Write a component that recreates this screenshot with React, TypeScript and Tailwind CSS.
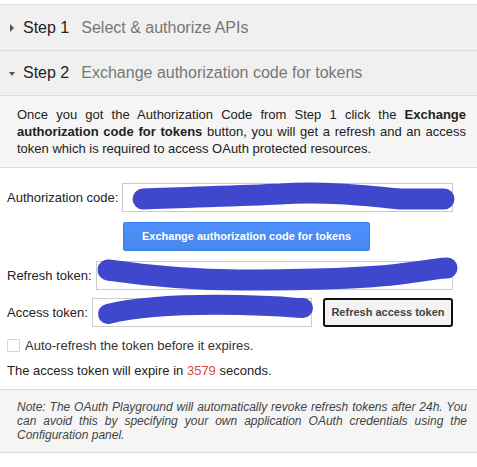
import React from 'react'

const font = { fontFamily: '"Liberation Sans", Arial, sans-serif' }

function StepHeader({ step, title, open }: { step: string; title: string; open?: boolean }) {
  return (
    <div className="flex items-center bg-[#f0f0f0] border-b border-[#dcdcdc] text-[16px]">
      <span className="w-[23px] flex justify-center pl-[1px]">
        {open ? (
          <span className="block w-0 h-0 border-l-[3.5px] border-r-[3.5px] border-t-[4px] border-l-transparent border-r-transparent border-t-[#555] mt-[1px]" />
        ) : (
          <span className="block w-0 h-0 border-t-[4px] border-b-[4px] border-l-[4px] border-t-transparent border-b-transparent border-l-[#555]" />
        )}
      </span>
      <span className="text-[#222]">{step}</span>
      <span className="ml-[12px] text-[#777]">{title}</span>
    </div>
  )
}

export default function App() {
  return (
    <div
      className="relative w-[477px] h-[467px] bg-white overflow-hidden text-[#222]"
      style={font}
    >
      <div className="mt-[4px] border-t border-[#dcdcdc]">
        <div className="h-[46px] flex flex-col [&>div]:h-full">
          <StepHeader step="Step 1" title="Select & authorize APIs" />
        </div>
        <div className="h-[45px] flex flex-col [&>div]:h-full">
          <StepHeader step="Step 2" title="Exchange authorization code for tokens" open />
        </div>

        <div className="bg-[#f5f5f5] border-b border-[#dcdcdc] pl-[17px] pr-[11px] pt-[10px] pb-[10px] text-[13px] leading-[17px] text-[#222] text-justify">
          Once you got the Authorization Code from Step 1 click the{' '}
          <b>Exchange authorization code for tokens</b> button, you will get a refresh and an
          access token which is required to access OAuth protected resources.
        </div>

        <div className="pl-[7px] pr-[24px] pt-[15px] text-[13px] text-[#222]">
          <div className="flex items-center gap-[4px]">
            <span>Authorization code:</span>
            <div className="flex-1 h-[29px] border border-[#ccc] bg-white" />
          </div>

          <button className="mt-[10px] ml-[116px] w-[247px] h-[29px] rounded-[2px] border border-[#3a7fea] bg-[linear-gradient(#4d90fe,#4787ed)] text-white text-[11px] font-bold">
            Exchange authorization code for tokens
          </button>

          <div className="mt-[10px] flex items-center gap-[4px]">
            <span>Refresh token:</span>
            <div className="flex-1 h-[29px] border border-[#ccc] bg-white" />
          </div>

          <div className="mt-[8px] flex items-center">
            <span>Access token:</span>
            <div className="ml-[4px] w-[220px] h-[29px] border border-[#ccc] bg-white" />
            <button className="ml-[11px] flex-1 h-[29px] rounded-[3px] border-2 border-[#111] bg-[#f3f3f3] text-[11px] font-bold text-[#444]">
              Refresh access token
            </button>
          </div>

          <div className="mt-[12px] h-[13px] flex items-center">
            <span className="w-[13px] h-[13px] border border-[#d6d6d6] rounded-[1px] bg-white" />
            <span className="ml-[5px] text-[#333]">Auto-refresh the token before it expires.</span>
          </div>

          <div className="mt-[11px] leading-[15px] text-[#222]">
            The access token will expire in <span className="text-[#dd4b39]">3579</span> seconds.
          </div>
        </div>

        <div className="mt-[11px] bg-[#f5f5f5] border-t border-b border-[#dcdcdc] pl-[17px] pr-[10px] pt-[10px] pb-[10px] text-[12px] leading-[14px] italic text-[#444] text-justify">
          Note: The OAuth Playground will automatically revoke refresh tokens after 24h. You
          can avoid this by specifying your own application OAuth credentials using the
          Configuration panel.
        </div>
      </div>

      {/* redaction scribbles */}
      <svg
        className="absolute inset-0 pointer-events-none"
        width="477"
        height="467"
        viewBox="0 0 477 467"
        fill="none"
        stroke="#3f48cc"
        strokeLinecap="round"
        strokeLinejoin="round"
      >
        <path strokeWidth="21" d="M143 199 C 190 197, 240 196, 280 194 C 320 191, 360 195, 400 199 L 444 199" />
        <path strokeWidth="21" d="M108 270 C 150 276, 200 280, 240 280 C 300 280, 360 279, 400 274 S 440 268, 447 268" />
        <path strokeWidth="20" d="M108 314 C 140 306, 190 304, 240 305 S 290 308, 303 308" />
      </svg>
    </div>
  )
}
